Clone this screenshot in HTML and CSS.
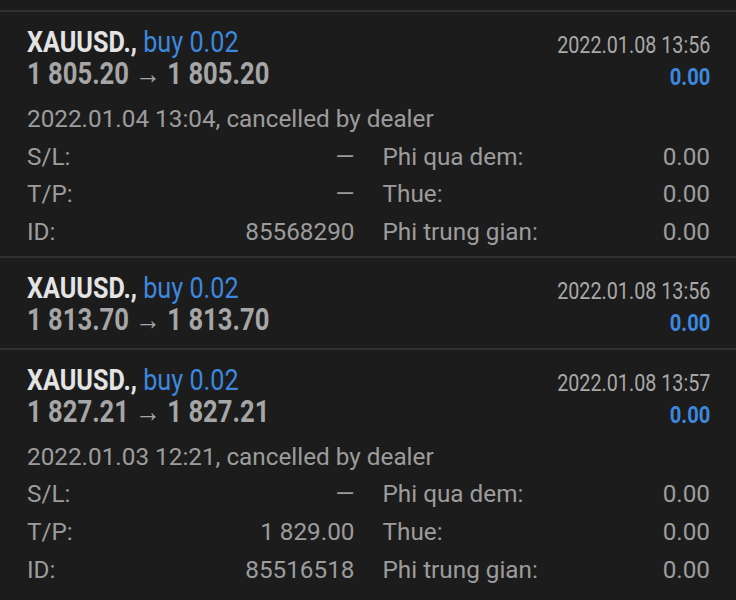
FILE: index.html
```html
<!DOCTYPE html>
<html>
<head>
<meta charset="utf-8">
<link rel="stylesheet" href="styles.css">
</head>
<body>
<div class="list">
  <div class="deal">
    <div class="head">
      <div class="left">
        <div class="l1"><span class="cond"><span class="sym">XAUUSD.,</span> <span class="blue">buy 0.02</span></span></div>
        <div class="l2"><span class="cond">1 805.20 → 1 805.20</span></div>
      </div>
      <div class="right">
        <div class="l1"><span class="cond r date">2022.01.08 13:56</span></div>
        <div class="l2"><span class="cond r profit">0.00</span></div>
      </div>
    </div>
    <div class="details">
      <div class="note">2022.01.04 13:04, cancelled by dealer</div>
      <div class="grid">
        <div class="kv"><span>S/L:</span><span>—</span></div>
        <div class="kv"><span>Phi qua dem:</span><span>0.00</span></div>
        <div class="kv"><span>T/P:</span><span>—</span></div>
        <div class="kv"><span>Thue:</span><span>0.00</span></div>
        <div class="kv"><span>ID:</span><span>85568290</span></div>
        <div class="kv"><span>Phi trung gian:</span><span>0.00</span></div>
      </div>
    </div>
  </div>
  <div class="deal">
    <div class="head">
      <div class="left">
        <div class="l1"><span class="cond"><span class="sym">XAUUSD.,</span> <span class="blue">buy 0.02</span></span></div>
        <div class="l2"><span class="cond">1 813.70 → 1 813.70</span></div>
      </div>
      <div class="right">
        <div class="l1"><span class="cond r date">2022.01.08 13:56</span></div>
        <div class="l2"><span class="cond r profit">0.00</span></div>
      </div>
    </div>
  </div>
  <div class="deal">
    <div class="head">
      <div class="left">
        <div class="l1"><span class="cond"><span class="sym">XAUUSD.,</span> <span class="blue">buy 0.02</span></span></div>
        <div class="l2"><span class="cond">1 827.21 → 1 827.21</span></div>
      </div>
      <div class="right">
        <div class="l1"><span class="cond r date">2022.01.08 13:57</span></div>
        <div class="l2"><span class="cond r profit">0.00</span></div>
      </div>
    </div>
    <div class="details">
      <div class="note">2022.01.03 12:21, cancelled by dealer</div>
      <div class="grid">
        <div class="kv"><span>S/L:</span><span>—</span></div>
        <div class="kv"><span>Phi qua dem:</span><span>0.00</span></div>
        <div class="kv"><span>T/P:</span><span>1 829.00</span></div>
        <div class="kv"><span>Thue:</span><span>0.00</span></div>
        <div class="kv"><span>ID:</span><span>85516518</span></div>
        <div class="kv"><span>Phi trung gian:</span><span>0.00</span></div>
      </div>
    </div>
  </div>
</div>
</body>
</html>
```
FILE: styles.css
```css
html, body {
  margin: 0;
  padding: 0;
  background: #1c1c1c;
  height: 600px;
  overflow: hidden;
}
body {
  font-family: Roboto, "Noto Sans", sans-serif;
  color: #9e9e9e;
}
.list {
  padding-top: 10px;
}
.deal {
  border-top: 2px solid #303030;
  padding: 14px 26px 12px 27px;
}
.head {
  display: flex;
  justify-content: space-between;
}
.left, .right {
  display: flex;
  flex-direction: column;
}
.right {
  align-items: flex-end;
  padding-top: 3px;
  margin-bottom: -3px;
}
.l1, .l2 {
  height: 32px;
  line-height: 32px;
  white-space: nowrap;
}
.cond {
  display: inline-block;
  transform: scaleX(0.84);
  transform-origin: left center;
}
.cond.r {
  transform-origin: right center;
}
.left .l1 {
  font-size: 30px;
  font-weight: 700;
}
.left .l1 .blue {
  font-weight: 400;
  color: #3c88df;
}
.sym {
  color: #e4e4e4;
}
.left .l2 {
  font-size: 30.5px;
  font-weight: 700;
  color: #a6a6a6;
}
.date {
  font-size: 23.5px;
  color: #a8a8a8;
}
.profit {
  font-size: 24px;
  font-weight: 700;
  color: #3c88df;
}
.details {
  padding-top: 10px;
  margin-bottom: -7px;
  font-size: 24.3px;
  color: #9c9c9c;
}
.note, .kv {
  height: 37.7px;
  line-height: 37.7px;
  white-space: nowrap;
}
.grid {
  display: grid;
  grid-template-columns: 1fr 1fr;
  column-gap: 28px;
}
.kv {
  display: flex;
  justify-content: space-between;
}
```
